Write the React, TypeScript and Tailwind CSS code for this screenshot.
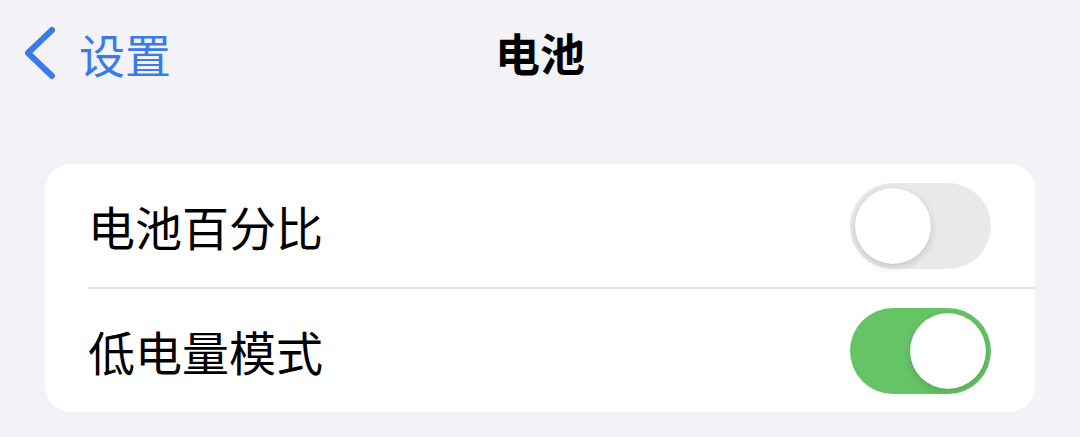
import React from 'react';

const font = { fontFamily: '"Noto Sans CJK SC", "Noto Sans", sans-serif' };

function Toggle({ on }: { on: boolean }) {
  return (
    <div
      className={
        on
          ? 'flex h-[86px] w-[141px] items-center justify-end rounded-full bg-[#65c466] px-[5px]'
          : 'flex h-[86px] w-[141px] items-center justify-start rounded-full bg-[#e9e9eb] px-[5px]'
      }
    >
      <div className="h-[76px] w-[76px] rounded-full bg-white shadow-[0_3px_8px_rgba(0,0,0,0.15),0_0_1px_rgba(0,0,0,0.12)]" />
    </div>
  );
}

function Row({ label, on }: { label: string; on: boolean }) {
  return (
    <div className="flex h-[123px] items-center justify-between pl-[43px] pr-[44px]">
      <span className="text-[47px] leading-none text-black" style={font}>
        {label}
      </span>
      <Toggle on={on} />
    </div>
  );
}

export default function App() {
  return (
    <div className="h-[437px] w-[1080px] overflow-hidden bg-[#f2f2f7]" style={font}>
      {/* Nav bar */}
      <div className="grid h-[106px] grid-cols-[1fr_auto_1fr] items-center">
        <div className="flex items-center gap-[24px] pl-[23px]">
          <svg width="32" height="54" viewBox="0 0 32 54" fill="none">
            <polyline
              points="29,4 5,27 29,50"
              stroke="#3a7bea"
              strokeWidth="6"
              strokeLinecap="round"
              strokeLinejoin="round"
            />
          </svg>
          <span className="text-[46px] leading-none text-[#3a7bea]">设置</span>
        </div>
        <div className="-mt-[2px] text-[45px] font-bold leading-none text-black">电池</div>
        <div />
      </div>

      {/* Settings group */}
      <div className="mx-[45px] mt-[58px] rounded-[26px] bg-white">
        <Row label="电池百分比" on={false} />
        <div className="ml-[43px] h-[2px] bg-[#e3e3e6]" />
        <Row label="低电量模式" on={true} />
      </div>
    </div>
  );
}
